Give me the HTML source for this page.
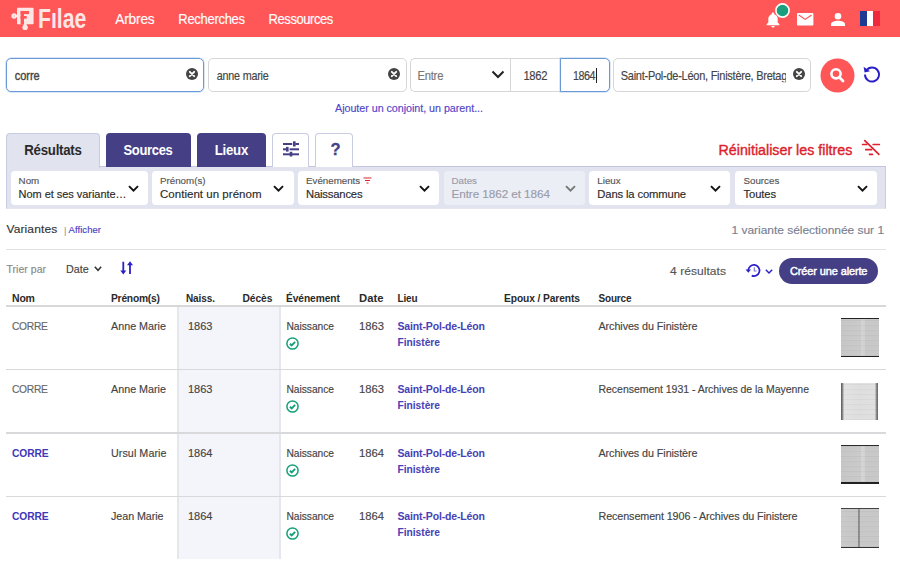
<!DOCTYPE html><html><head><meta charset="utf-8"><style>
html,body{margin:0;padding:0;width:900px;height:562px;overflow:hidden;background:#fff;}
body{position:relative;font-family:"Liberation Sans",sans-serif;}
.t{position:absolute;line-height:1;white-space:nowrap;-webkit-text-stroke:0.15px currentColor}
.t.b{-webkit-text-stroke:0}
svg{position:absolute;overflow:visible}
</style></head><body>
<div style="position:absolute;left:0px;top:0px;width:900px;height:37px;box-sizing:border-box;background:#ff5757"></div>
<svg style="left:0px;top:0px" width="40" height="37" viewBox="0 0 40 37">
<g fill="#fde6e6">
<rect x="17" y="7.7" width="16.6" height="16.6" rx="1"/>
<circle cx="14.1" cy="16" r="2.7"/>
<rect x="15" y="15" width="3" height="2"/>
<circle cx="25.1" cy="27.4" r="2.7"/>
</g>
<g fill="#ff5757">
<rect x="20.6" y="11" width="3.4" height="13.4"/>
<rect x="20.6" y="11" width="8.5" height="3.1"/>
<rect x="20.6" y="16" width="6.1" height="2.7"/>
<circle cx="14.1" cy="16" r="0.8" fill="#fbb"/>
</g>
<rect x="23.6" y="24" width="3" height="2" fill="#fde6e6"/>
</svg>
<div class="t b" style="left:38.00px;top:11.00px;font-size:21.25px;letter-spacing:-0.019px;color:#fde6e6;font-weight:bold;transform:scaleY(1.273);transform-origin:0 17px;">Fılae</div>
<div class="t" style="left:115.30px;top:13.00px;font-size:13.75px;letter-spacing:-0.220px;color:#fff;transform:scaleY(1.096);transform-origin:0 11px;">Arbres</div>
<div class="t" style="left:178.30px;top:13.00px;font-size:13.0px;letter-spacing:-0.297px;color:#fff;transform:scaleY(1.154);transform-origin:0 11px;">Recherches</div>
<div class="t" style="left:268.60px;top:13.00px;font-size:13.0px;letter-spacing:-0.436px;color:#fff;transform:scaleY(1.171);transform-origin:0 11px;">Ressources</div>
<svg style="left:766px;top:12px" width="14" height="16" viewBox="0 0 14 16">
<path fill="#fff" d="M7 0.5c-0.7 0-1.2 0.5-1.2 1.1v0.6C3.6 2.8 2.3 4.6 2.3 6.8v3.6L0.6 12.3v0.9h12.8v-0.9l-1.7-1.9V6.8c0-2.2-1.3-4-3.5-4.6V1.6C8.2 1 7.7 0.5 7 0.5z M5.3 14c0 0.9 0.8 1.6 1.7 1.6s1.7-0.7 1.7-1.6z"/></svg>
<svg style="left:775.3px;top:3.2px" width="15" height="15" viewBox="0 0 15 15"><circle cx="7.5" cy="7.5" r="6.6" fill="#1a9e7e" stroke="#fff" stroke-width="1.6"/></svg>
<svg style="left:797.2px;top:13px" width="16.4" height="12.6" viewBox="0 0 16.4 12.6">
<rect x="0" y="0" width="16.4" height="12.6" rx="1" fill="#fff"/>
<path d="M1.8 2 L8.2 6.4 L14.6 2" fill="none" stroke="#ff5757" stroke-width="1.2"/></svg>
<svg style="left:831px;top:13px" width="14" height="13" viewBox="0 0 14 13">
<circle cx="7" cy="3.3" r="3.3" fill="#fff"/><path d="M0 13v-1.6C0 9.2 3.2 7.8 7 7.8s7 1.4 7 3.6V13z" fill="#fff"/></svg>
<svg style="left:860px;top:11px" width="20" height="15" viewBox="0 0 20 15">
<rect x="0" y="0" width="7" height="15" fill="#1f3a93"/><rect x="7" y="0" width="6" height="15" fill="#fff"/><rect x="13" y="0" width="7" height="15" fill="#ee2a3c"/></svg>
<div style="position:absolute;left:6px;top:58px;width:198px;height:34px;box-sizing:border-box;border:1px solid #6a9ad6;border-radius:5px;box-shadow:0 0 0 0.5px #b7cff0"></div>
<div class="t" style="left:14.70px;top:71.00px;font-size:11.0px;letter-spacing:-0.031px;color:#444;-webkit-text-stroke:0.35px #444;transform:scaleY(1.08);transform-origin:0 9px">corre</div>
<svg style="left:185.5px;top:68px" width="12" height="12" viewBox="0 0 12 12"><circle cx="6" cy="6" r="6" fill="#444"/><path d="M3.8 3.8L8.2 8.2M8.2 3.8L3.8 8.2" stroke="#fff" stroke-width="1.9" stroke-linecap="round"/></svg>
<div style="position:absolute;left:208px;top:58px;width:199px;height:34px;box-sizing:border-box;border:1px solid #d6d6d6;border-radius:5px"></div>
<div class="t" style="left:216.80px;top:71.00px;font-size:10.75px;letter-spacing:-0.206px;color:#444;transform:scaleY(1.150);transform-origin:0 9px;">anne marie</div>
<svg style="left:388px;top:68px" width="12" height="12" viewBox="0 0 12 12"><circle cx="6" cy="6" r="6" fill="#444"/><path d="M3.8 3.8L8.2 8.2M8.2 3.8L3.8 8.2" stroke="#fff" stroke-width="1.9" stroke-linecap="round"/></svg>
<div style="position:absolute;left:410px;top:58px;width:101px;height:34px;box-sizing:border-box;border:1px solid #d6d6d6;border-radius:5px 0 0 5px;border-right:none"></div>
<div style="position:absolute;left:510px;top:58px;width:51px;height:34px;box-sizing:border-box;border:1px solid #d6d6d6;border-left:1px solid #d6d6d6"></div>
<div class="t" style="left:417.40px;top:71.00px;font-size:11.25px;letter-spacing:-0.219px;color:#777;transform:scaleY(1.110);transform-origin:0 9px;">Entre</div>
<svg style="left:491px;top:70px" width="14" height="9" viewBox="0 0 14 9"><path d="M1.5 1.5L7 7L12.5 1.5" fill="none" stroke="#222" stroke-width="2"/></svg>
<div class="t" style="left:523.40px;top:71.00px;font-size:11.25px;letter-spacing:-0.300px;color:#444;transform:scaleY(1.112);transform-origin:0 9px;">1862</div>
<div style="position:absolute;left:560px;top:58px;width:50px;height:34px;box-sizing:border-box;border:1px solid #6a9ad6;border-radius:0 5px 5px 0;box-shadow:0 0 0 0.5px #b7cff0"></div>
<div class="t" style="left:573.00px;top:71.00px;font-size:10.75px;letter-spacing:-0.458px;color:#444;transform:scaleY(1.170);transform-origin:0 9px;">1864</div>
<div style="position:absolute;left:596px;top:68px;width:1px;height:15px;box-sizing:border-box;background:#222"></div>
<div style="position:absolute;left:613px;top:58px;width:198px;height:34px;box-sizing:border-box;border:1px solid #d6d6d6;border-radius:5px;overflow:hidden"></div>
<div class="t" style="left:620.70px;top:71.00px;font-size:11.0px;letter-spacing:-0.254px;color:#444;transform:scaleY(1.144);transform-origin:0 9px;clip-path:inset(0 1px 0 0)">Saint-Pol-de-Léon, Finistère, Bretag</div>
<div style="position:absolute;left:787px;top:62px;width:5px;height:26px;box-sizing:border-box;background:#fff"></div>
<svg style="left:792.5px;top:68px" width="12" height="12" viewBox="0 0 12 12"><circle cx="6" cy="6" r="6" fill="#444"/><path d="M3.8 3.8L8.2 8.2M8.2 3.8L3.8 8.2" stroke="#fff" stroke-width="1.9" stroke-linecap="round"/></svg>
<svg style="left:820px;top:58.4px" width="35" height="35" viewBox="0 0 35 35"><circle cx="17.5" cy="17.5" r="17" fill="#ff5757"/>
<circle cx="16" cy="15.8" r="4.6" fill="none" stroke="#fff" stroke-width="2.6"/><path d="M19.3 19.2L23 22.9" stroke="#fff" stroke-width="2.8" stroke-linecap="round"/></svg>
<svg style="left:863px;top:65.2px" width="18" height="18" viewBox="0 0 18 18">
<path d="M3.3 5.5A7 7 0 1 1 2 9.5" fill="none" stroke="#2b20c8" stroke-width="1.95"/>
<path d="M0.6 1.8L1.6 7.5L7 6.2z" fill="#2b20c8"/></svg>
<div class="t" style="left:335.00px;top:103.00px;font-size:10.75px;letter-spacing:-0.043px;color:#5046c8;transform:scaleY(1.025);transform-origin:0 9px;">Ajouter un conjoint, un parent...</div>
<div style="position:absolute;left:6px;top:166px;width:880px;height:43px;box-sizing:border-box;background:#e1e3ef;border:1px solid #c9cbe2;border-top:1.5px solid #c4c6e0;border-bottom:1px solid #e6e7ee"></div>
<div style="position:absolute;left:6px;top:133px;width:94px;height:35px;box-sizing:border-box;background:#e1e3ef;border:1px solid #c9cbe2;border-bottom:none;border-radius:4px 4px 0 0"></div>
<div style="position:absolute;left:7px;top:165px;width:92px;height:3.5px;box-sizing:border-box;background:#e1e3ef"></div>
<div class="t b" style="left:24.30px;top:144.00px;font-size:13.25px;letter-spacing:-0.266px;color:#2a2a2a;font-weight:bold;transform:scaleY(1.136);transform-origin:0 11px;">Résultats</div>
<div style="position:absolute;left:106px;top:133px;width:85px;height:34px;box-sizing:border-box;background:#453f86;border-radius:4px 4px 0 0"></div>
<div class="t b" style="left:123.50px;top:144.00px;font-size:13.0px;letter-spacing:-0.342px;color:#fff;font-weight:bold;transform:scaleY(1.157);transform-origin:0 11px;">Sources</div>
<div style="position:absolute;left:197px;top:133px;width:69px;height:34px;box-sizing:border-box;background:#453f86;border-radius:4px 4px 0 0"></div>
<div class="t b" style="left:214.70px;top:144.00px;font-size:13.25px;letter-spacing:-0.256px;color:#fff;font-weight:bold;transform:scaleY(1.129);transform-origin:0 11px;">Lieux</div>
<div style="position:absolute;left:272px;top:133px;width:37px;height:34px;box-sizing:border-box;border:1px solid #c9cbe2;border-bottom:none;border-radius:4px 4px 0 0;background:#fff"></div>
<svg style="left:0px;top:0px" width="900" height="200" viewBox="0 0 900 200">
<g fill="#453f86">
<rect x="283" y="143" width="9.2" height="2"/><rect x="293" y="141.3" width="2.6" height="5.2"/><rect x="295.3" y="143" width="3.7" height="2"/>
<rect x="283" y="148.3" width="3.3" height="2"/><rect x="286" y="146.9" width="2.6" height="4.7"/><rect x="289.6" y="148.3" width="9.4" height="2"/>
<rect x="283" y="153.3" width="16" height="2"/><rect x="289.7" y="151.8" width="2.6" height="4.7"/>
</g></svg>
<div style="position:absolute;left:315px;top:133px;width:38px;height:34px;box-sizing:border-box;border:1px solid #c9cbe2;border-bottom:none;border-radius:4px 4px 0 0;background:#fff"></div>
<div class="t b" style="left:330.50px;top:141.00px;font-size:16.5px;letter-spacing:0.000px;color:#453f86;font-weight:bold;-webkit-text-stroke:0.3px #453f86">?</div>
<div class="t" style="left:718.50px;top:143.00px;font-size:14.25px;letter-spacing:0.001px;color:#dc1f2d;-webkit-text-stroke:0.4px #dc1f2d">Réinitialiser les filtres</div>
<svg style="left:0;top:0" width="900" height="200"><g stroke="#e0202e" stroke-width="1.7" fill="none" stroke-linecap="round">
<path d="M862.6 144.5H866.6M873.2 144.5H879.3M865.8 149.7H871.5M869.6 154.4H872.4"/><path d="M864.8 140.6L878.9 154.4"/></g></svg>
<div style="position:absolute;left:11px;top:171px;width:137px;height:34px;box-sizing:border-box;background:#fff;border-radius:4px"></div>
<div class="t" style="left:18.60px;top:176.00px;font-size:9.75px;letter-spacing:0.000px;color:#555;">Nom</div>
<div class="t" style="left:18.60px;top:189.00px;font-size:11.0px;letter-spacing:-0.046px;color:#2a2a2a;transform:scaleY(1.048);transform-origin:0 9px;">Nom et ses variante…</div>
<svg style="left:127.5px;top:185px" width="11" height="8" viewBox="0 0 11 8"><path d="M1 1.1L5.5 5.6L10 1.1" fill="none" stroke="#111" stroke-width="1.9"/></svg>
<div style="position:absolute;left:152px;top:171px;width:142px;height:34px;box-sizing:border-box;background:#fff;border-radius:4px"></div>
<div class="t" style="left:160.00px;top:176.00px;font-size:9.75px;letter-spacing:0.000px;color:#555;">Prénom(s)</div>
<div class="t" style="left:160.00px;top:189.00px;font-size:11.5px;letter-spacing:0.029px;color:#2a2a2a;">Contient un prénom</div>
<svg style="left:273.0px;top:185px" width="11" height="8" viewBox="0 0 11 8"><path d="M1 1.1L5.5 5.6L10 1.1" fill="none" stroke="#111" stroke-width="1.9"/></svg>
<div style="position:absolute;left:298px;top:171px;width:141px;height:34px;box-sizing:border-box;background:#fff;border-radius:4px"></div>
<div class="t" style="left:306.00px;top:176.00px;font-size:9.75px;letter-spacing:0.000px;color:#555;">Evénements</div>
<div class="t" style="left:306.00px;top:189.00px;font-size:11.25px;letter-spacing:-0.181px;color:#2a2a2a;transform:scaleY(1.048);transform-origin:0 9px;">Naissances</div>
<svg style="left:419.0px;top:185px" width="11" height="8" viewBox="0 0 11 8"><path d="M1 1.1L5.5 5.6L10 1.1" fill="none" stroke="#111" stroke-width="1.9"/></svg>
<svg style="left:363px;top:177px" width="9" height="7" viewBox="0 0 9 7"><g stroke="#e0202e" stroke-width="1.1"><path d="M0.5 1H8.5M2 3.5H7M3.5 6H5.5"/></g></svg>
<div style="position:absolute;left:444px;top:171px;width:141px;height:34px;box-sizing:border-box;background:#eceef6;border-radius:4px"></div>
<div class="t" style="left:451.50px;top:176.00px;font-size:9.75px;letter-spacing:0.000px;color:#9a9ca8;">Dates</div>
<div class="t" style="left:451.50px;top:188.00px;font-size:11.75px;letter-spacing:-0.088px;color:#9a9ca8;">Entre 1862 et 1864</div>
<svg style="left:565.0px;top:185px" width="11" height="8" viewBox="0 0 11 8"><path d="M1 1.1L5.5 5.6L10 1.1" fill="none" stroke="#777" stroke-width="1.9"/></svg>
<div style="position:absolute;left:589px;top:171px;width:141px;height:34px;box-sizing:border-box;background:#fff;border-radius:4px"></div>
<div class="t" style="left:597.30px;top:176.00px;font-size:9.75px;letter-spacing:0.000px;color:#555;">Lieux</div>
<div class="t" style="left:597.30px;top:189.00px;font-size:11.25px;letter-spacing:-0.137px;color:#2a2a2a;transform:scaleY(1.041);transform-origin:0 9px;">Dans la commune</div>
<svg style="left:710.0px;top:185px" width="11" height="8" viewBox="0 0 11 8"><path d="M1 1.1L5.5 5.6L10 1.1" fill="none" stroke="#111" stroke-width="1.9"/></svg>
<div style="position:absolute;left:735px;top:171px;width:142px;height:34px;box-sizing:border-box;background:#fff;border-radius:4px"></div>
<div class="t" style="left:743.50px;top:176.00px;font-size:9.75px;letter-spacing:0.000px;color:#555;">Sources</div>
<div class="t" style="left:743.50px;top:189.00px;font-size:11.25px;letter-spacing:-0.125px;color:#2a2a2a;transform:scaleY(1.040);transform-origin:0 9px;">Toutes</div>
<svg style="left:856.5px;top:185px" width="11" height="8" viewBox="0 0 11 8"><path d="M1 1.1L5.5 5.6L10 1.1" fill="none" stroke="#111" stroke-width="1.9"/></svg>
<div class="t" style="left:6.40px;top:223.00px;font-size:12.0px;letter-spacing:0.131px;color:#333;transform:scaleY(0.962);transform-origin:0 10px;">Variantes</div>
<div class="t" style="left:64.00px;top:226.00px;font-size:9.5px;letter-spacing:0.000px;color:#a0a0a0;">|</div>
<div class="t" style="left:68.50px;top:225.00px;font-size:9.5px;letter-spacing:0.071px;color:#4a3fc4;transform:scaleY(0.921);transform-origin:0 8px;">Afficher</div>
<div class="t" style="left:731.50px;top:224.00px;font-size:12.0px;letter-spacing:-0.031px;color:#7a7f92;transform:scaleY(0.981);transform-origin:0 10px;">1 variante sélectionnée sur 1</div>
<div style="position:absolute;left:6px;top:249px;width:879.5px;height:1.1999999999999886px;box-sizing:border-box;background:#e2e2e2"></div>
<div class="t" style="left:6.40px;top:264.00px;font-size:10.5px;letter-spacing:0.044px;color:#888;transform:scaleY(0.958);transform-origin:0 9px;">Trier par</div>
<div class="t" style="left:66.00px;top:264.00px;font-size:10.75px;letter-spacing:0.017px;color:#444;transform:scaleY(0.961);transform-origin:0 9px;">Date</div>
<svg style="left:93.5px;top:266px" width="8" height="6" viewBox="0 0 8 6"><path d="M0.8 0.8L4 4.3L7.2 0.8" fill="none" stroke="#333" stroke-width="1.5"/></svg>
<svg style="left:0;top:0" width="900" height="300"><g stroke="#2b20c8" stroke-width="1.8" fill="none"><path d="M123.3 261.8V271.5M130 264V273.9"/></g>
<path d="M120.3 270.4H126.3L123.3 274.4zM127 265.2H133L130 261.2z" fill="#2b20c8"/></svg>
<div class="t" style="left:670.00px;top:265.00px;font-size:12.0px;letter-spacing:0.062px;color:#555;transform:scaleY(0.968);transform-origin:0 10px;">4 résultats</div>
<svg style="left:0;top:0" width="900" height="300"><g fill="none" stroke="#2b20c8" stroke-width="1.7">
<path d="M751.7 275.65A5.6 5.6 0 1 0 748.3 270.5"/></g><path d="M745.6 269.4H751L748.3 272.8z" fill="#2b20c8"/>
<path d="M754.3 267.3V271H756.6" fill="none" stroke="#7d76d6" stroke-width="1.1"/></svg>
<svg style="left:765px;top:268.6px" width="8" height="6" viewBox="0 0 8 6"><path d="M0.8 0.8L4 4L7.2 0.8" fill="none" stroke="#2b20c8" stroke-width="1.45"/></svg>
<div style="position:absolute;left:779px;top:257.6px;width:99.29999999999995px;height:26.0px;box-sizing:border-box;background:#453f86;border-radius:13px"></div>
<div class="t" style="left:790.00px;top:266.00px;font-size:11.0px;letter-spacing:-0.133px;color:#fff;transform:scaleY(1.062);transform-origin:0 9px;-webkit-text-stroke:0.45px #fff">Créer une alerte</div>
<div class="t b" style="left:12.00px;top:293.00px;font-size:10.5px;letter-spacing:-0.188px;color:#2a2a2a;font-weight:bold;transform:scaleY(1.049);transform-origin:0 9px;">Nom</div>
<div class="t b" style="left:111.00px;top:294.00px;font-size:10.25px;letter-spacing:-0.219px;color:#2a2a2a;font-weight:bold;transform:scaleY(1.081);transform-origin:0 8px;">Prénom(s)</div>
<div class="t b" style="left:186.00px;top:294.00px;font-size:10.0px;letter-spacing:-0.100px;color:#2a2a2a;font-weight:bold;transform:scaleY(1.086);transform-origin:0 8px;">Naiss.</div>
<div class="t b" style="left:242.50px;top:294.00px;font-size:10.25px;letter-spacing:-0.062px;color:#2a2a2a;font-weight:bold;transform:scaleY(1.059);transform-origin:0 8px;">Décès</div>
<div class="t b" style="left:286.00px;top:294.00px;font-size:10.25px;letter-spacing:-0.094px;color:#2a2a2a;font-weight:bold;transform:scaleY(1.065);transform-origin:0 8px;">Événement</div>
<div class="t b" style="left:359.00px;top:293.00px;font-size:11.25px;letter-spacing:0.042px;color:#2a2a2a;font-weight:bold;transform:scaleY(0.981);transform-origin:0 9px;">Date</div>
<div class="t b" style="left:397.50px;top:294.00px;font-size:10.0px;letter-spacing:-0.167px;color:#2a2a2a;font-weight:bold;transform:scaleY(1.097);transform-origin:0 8px;">Lieu</div>
<div class="t b" style="left:504.00px;top:294.00px;font-size:10.25px;letter-spacing:-0.107px;color:#2a2a2a;font-weight:bold;transform:scaleY(1.070);transform-origin:0 8px;">Epoux / Parents</div>
<div class="t b" style="left:598.50px;top:294.00px;font-size:10.0px;letter-spacing:-0.175px;color:#2a2a2a;font-weight:bold;transform:scaleY(1.095);transform-origin:0 8px;">Source</div>
<div style="position:absolute;left:177.2px;top:306px;width:104.0px;height:253px;box-sizing:border-box;background:#f4f5fa;border-left:2px solid #e6e7ec;border-right:2px solid #e6e7ec"></div>
<div style="position:absolute;left:6px;top:305.2px;width:879.5px;height:1.8000000000000114px;box-sizing:border-box;background:#d8d8d8"></div>
<div class="t" style="left:12.00px;top:322.00px;font-size:10.25px;letter-spacing:-0.300px;color:#666;transform:scaleY(1.082);transform-origin:0 8px;">CORRE</div>
<div class="t" style="left:111.00px;top:321.00px;font-size:10.75px;letter-spacing:0.000px;color:#444;transform:scaleY(1.017);transform-origin:0 9px;">Anne Marie</div>
<div class="t" style="left:188.00px;top:321.00px;font-size:11.0px;letter-spacing:0.000px;color:#444;">1863</div>
<div class="t" style="left:286.50px;top:322.00px;font-size:10.25px;letter-spacing:-0.047px;color:#444;transform:scaleY(1.061);transform-origin:0 8px;">Naissance</div>
<div class="t" style="left:359.00px;top:321.00px;font-size:11.25px;letter-spacing:0.000px;color:#444;transform:scaleY(0.985);transform-origin:0 9px;">1863</div>
<div class="t b" style="left:397.50px;top:321.00px;font-size:10.5px;letter-spacing:-0.148px;color:#4741b6;font-weight:bold;transform:scaleY(1.056);transform-origin:0 9px;">Saint-Pol-de-Léon</div>
<div class="t b" style="left:397.50px;top:338.00px;font-size:10.25px;letter-spacing:-0.031px;color:#4741b6;font-weight:bold;transform:scaleY(1.059);transform-origin:0 8px;">Finistère</div>
<div class="t" style="left:598.50px;top:321.00px;font-size:10.75px;letter-spacing:-0.069px;color:#444;transform:scaleY(1.028);transform-origin:0 9px;">Archives du Finistère</div>
<svg style="left:286px;top:337.0px" width="13" height="13" viewBox="0 0 13 13"><circle cx="6.5" cy="6.5" r="5.6" fill="none" stroke="#16a07a" stroke-width="1.5"/><path d="M3.9 6.7L5.7 8.4L9.1 4.9" fill="none" stroke="#16a07a" stroke-width="1.9"/></svg>
<div style="position:absolute;left:6px;top:368.90000000000003px;width:879.5px;height:1.5px;box-sizing:border-box;background:#d9d9dc"></div>
<div class="t" style="left:12.00px;top:385.00px;font-size:10.25px;letter-spacing:-0.300px;color:#666;transform:scaleY(1.082);transform-origin:0 8px;">CORRE</div>
<div class="t" style="left:111.00px;top:384.00px;font-size:10.75px;letter-spacing:0.000px;color:#444;transform:scaleY(1.017);transform-origin:0 9px;">Anne Marie</div>
<div class="t" style="left:188.00px;top:384.00px;font-size:11.0px;letter-spacing:0.000px;color:#444;">1863</div>
<div class="t" style="left:286.50px;top:385.00px;font-size:10.25px;letter-spacing:-0.047px;color:#444;transform:scaleY(1.061);transform-origin:0 8px;">Naissance</div>
<div class="t" style="left:359.00px;top:384.00px;font-size:11.25px;letter-spacing:0.000px;color:#444;transform:scaleY(0.985);transform-origin:0 9px;">1863</div>
<div class="t b" style="left:397.50px;top:384.00px;font-size:10.5px;letter-spacing:-0.148px;color:#4741b6;font-weight:bold;transform:scaleY(1.056);transform-origin:0 9px;">Saint-Pol-de-Léon</div>
<div class="t b" style="left:397.50px;top:401.00px;font-size:10.25px;letter-spacing:-0.031px;color:#4741b6;font-weight:bold;transform:scaleY(1.059);transform-origin:0 8px;">Finistère</div>
<div class="t" style="left:598.50px;top:384.00px;font-size:10.5px;letter-spacing:-0.034px;color:#444;transform:scaleY(1.041);transform-origin:0 9px;">Recensement 1931 - Archives de la Mayenne</div>
<svg style="left:286px;top:400.3px" width="13" height="13" viewBox="0 0 13 13"><circle cx="6.5" cy="6.5" r="5.6" fill="none" stroke="#16a07a" stroke-width="1.5"/><path d="M3.9 6.7L5.7 8.4L9.1 4.9" fill="none" stroke="#16a07a" stroke-width="1.9"/></svg>
<div style="position:absolute;left:6px;top:432.20000000000005px;width:879.5px;height:1.5px;box-sizing:border-box;background:#d9d9dc"></div>
<div class="t b" style="left:12.00px;top:449.00px;font-size:10.25px;letter-spacing:-0.125px;color:#3e36b8;font-weight:bold;transform:scaleY(1.066);transform-origin:0 8px;">CORRE</div>
<div class="t" style="left:111.00px;top:448.00px;font-size:10.75px;letter-spacing:0.050px;color:#444;transform:scaleY(1.010);transform-origin:0 9px;">Ursul Marie</div>
<div class="t" style="left:188.00px;top:448.00px;font-size:11.0px;letter-spacing:0.000px;color:#444;">1864</div>
<div class="t" style="left:286.50px;top:449.00px;font-size:10.25px;letter-spacing:-0.047px;color:#444;transform:scaleY(1.061);transform-origin:0 8px;">Naissance</div>
<div class="t" style="left:359.00px;top:448.00px;font-size:11.25px;letter-spacing:0.000px;color:#444;transform:scaleY(0.985);transform-origin:0 9px;">1864</div>
<div class="t b" style="left:397.50px;top:448.00px;font-size:10.5px;letter-spacing:-0.148px;color:#4741b6;font-weight:bold;transform:scaleY(1.056);transform-origin:0 9px;">Saint-Pol-de-Léon</div>
<div class="t b" style="left:397.50px;top:465.00px;font-size:10.25px;letter-spacing:-0.031px;color:#4741b6;font-weight:bold;transform:scaleY(1.059);transform-origin:0 8px;">Finistère</div>
<div class="t" style="left:598.50px;top:448.00px;font-size:10.75px;letter-spacing:-0.069px;color:#444;transform:scaleY(1.028);transform-origin:0 9px;">Archives du Finistère</div>
<svg style="left:286px;top:463.6px" width="13" height="13" viewBox="0 0 13 13"><circle cx="6.5" cy="6.5" r="5.6" fill="none" stroke="#16a07a" stroke-width="1.5"/><path d="M3.9 6.7L5.7 8.4L9.1 4.9" fill="none" stroke="#16a07a" stroke-width="1.9"/></svg>
<div style="position:absolute;left:6px;top:495.50000000000006px;width:879.5px;height:1.5px;box-sizing:border-box;background:#d9d9dc"></div>
<div class="t b" style="left:12.00px;top:512.00px;font-size:10.25px;letter-spacing:-0.125px;color:#3e36b8;font-weight:bold;transform:scaleY(1.066);transform-origin:0 8px;">CORRE</div>
<div class="t" style="left:111.00px;top:511.00px;font-size:10.75px;letter-spacing:-0.069px;color:#444;transform:scaleY(1.027);transform-origin:0 9px;">Jean Marie</div>
<div class="t" style="left:188.00px;top:511.00px;font-size:11.0px;letter-spacing:0.000px;color:#444;">1864</div>
<div class="t" style="left:286.50px;top:512.00px;font-size:10.25px;letter-spacing:-0.047px;color:#444;transform:scaleY(1.061);transform-origin:0 8px;">Naissance</div>
<div class="t" style="left:359.00px;top:511.00px;font-size:11.25px;letter-spacing:0.000px;color:#444;transform:scaleY(0.985);transform-origin:0 9px;">1864</div>
<div class="t b" style="left:397.50px;top:511.00px;font-size:10.5px;letter-spacing:-0.148px;color:#4741b6;font-weight:bold;transform:scaleY(1.056);transform-origin:0 9px;">Saint-Pol-de-Léon</div>
<div class="t b" style="left:397.50px;top:528.00px;font-size:10.25px;letter-spacing:-0.031px;color:#4741b6;font-weight:bold;transform:scaleY(1.059);transform-origin:0 8px;">Finistère</div>
<div class="t" style="left:598.50px;top:511.00px;font-size:10.75px;letter-spacing:-0.090px;color:#444;transform:scaleY(1.031);transform-origin:0 9px;">Recensement 1906 - Archives du Finistere</div>
<svg style="left:286px;top:526.9px" width="13" height="13" viewBox="0 0 13 13"><circle cx="6.5" cy="6.5" r="5.6" fill="none" stroke="#16a07a" stroke-width="1.5"/><path d="M3.9 6.7L5.7 8.4L9.1 4.9" fill="none" stroke="#16a07a" stroke-width="1.9"/></svg>
<div style="position:absolute;left:840.5px;top:318.2px;width:38.5px;height:38.80000000000001px;box-sizing:border-box;background:repeating-linear-gradient(0deg,rgba(0,0,0,0.03) 0 1px,rgba(255,255,255,0.04) 1px 2px,rgba(0,0,0,0) 2px 5px),linear-gradient(90deg,#c6c6c6 0,#cacaca 20px,#d4d4d4 20px,#d0d0d0 24px,#c8c8c8 24px);border-top:1.7px solid #222;border-bottom:1.7px solid #222"></div>
<div style="position:absolute;left:840.8px;top:382.6px;width:37.40000000000009px;height:37.0px;box-sizing:border-box;background:repeating-linear-gradient(0deg,rgba(0,0,0,0.03) 0 1px,rgba(255,255,255,0.04) 1px 2px,rgba(0,0,0,0) 2px 5px),linear-gradient(90deg,#555 0,#999 2px,#e2e2e2 3px,#dedede 50%,#e0e0e0 34px,#999 35px,#555 37.4px)"></div>
<div style="position:absolute;left:840.6px;top:445px;width:38.19999999999993px;height:38.80000000000001px;box-sizing:border-box;background:repeating-linear-gradient(0deg,rgba(0,0,0,0.03) 0 1px,rgba(255,255,255,0.04) 1px 2px,rgba(0,0,0,0) 2px 5px),linear-gradient(90deg,#c6c6c6 0,#cacaca 20px,#d6d6d6 20px,#d2d2d2 24px,#c8c8c8 24px);border-top:1.7px solid #2a2a2a;border-bottom:2px solid #222"></div>
<div style="position:absolute;left:840.6px;top:507.7px;width:38.19999999999993px;height:39.900000000000034px;box-sizing:border-box;background:repeating-linear-gradient(0deg,rgba(0,0,0,0.03) 0 1px,rgba(255,255,255,0.04) 1px 2px,rgba(0,0,0,0) 2px 5px),linear-gradient(90deg,#cacaca 0,#c6c6c6 17.5px,#8a8a8a 17.5px,#999 19.5px,#c8c8c8 19.5px);border-top:1.7px solid #444;border-bottom:1.7px solid #333"></div>
</body></html>
